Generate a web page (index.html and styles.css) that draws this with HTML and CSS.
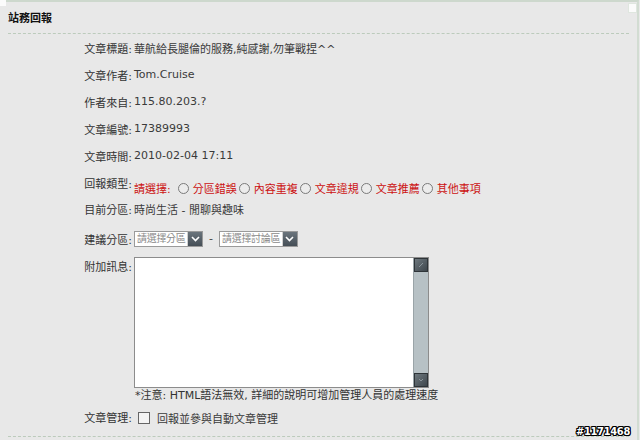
FILE: index.html
```html
<!DOCTYPE html>
<html lang="zh-Hant">
<head>
<meta charset="utf-8">
<title>站務回報</title>
<link rel="stylesheet" href="styles.css">
</head>
<body>
<div class="page">
  <span class="corner corner-tl"></span>
  <span class="corner corner-tr"></span>
  <h1 class="title">站務回報</h1>
  <div class="form">
    <div class="row"><span class="label">文章標題:</span><span class="value">華航給長腿倫的服務,純感謝,勿筆戰捏^^</span></div>
    <div class="row"><span class="label">文章作者:</span><span class="value">Tom.Cruise</span></div>
    <div class="row"><span class="label">作者來自:</span><span class="value">115.80.203.?</span></div>
    <div class="row"><span class="label">文章編號:</span><span class="value">17389993</span></div>
    <div class="row"><span class="label">文章時間:</span><span class="value">2010-02-04 17:11</span></div>
    <div class="row row-type">
      <span class="label">回報類型:</span>
      <span class="value options">
        <span class="red">請選擇:</span>
        <span class="radio"></span><span class="red">分區錯誤</span>
        <span class="radio"></span><span class="red">內容重複</span>
        <span class="radio"></span><span class="red">文章違規</span>
        <span class="radio"></span><span class="red">文章推薦</span>
        <span class="radio"></span><span class="red">其他事項</span>
      </span>
    </div>
    <div class="row row-cur"><span class="label">目前分區:</span><span class="value">時尚生活 - 閒聊與趣味</span></div>
    <div class="row row-sel">
      <span class="label">建議分區:</span>
      <span class="value selects">
        <span class="select sel1"><span class="sel-text">請選擇分區</span><span class="sel-btn"><svg width="9" height="6" viewBox="0 0 9 6"><path d="M1 1 L4.5 4.5 L8 1" fill="none" stroke="#fff" stroke-width="1.6"/></svg></span></span>
        <span class="dash">-</span>
        <span class="select sel2"><span class="sel-text">請選擇討論區</span><span class="sel-btn"><svg width="9" height="6" viewBox="0 0 9 6"><path d="M1 1 L4.5 4.5 L8 1" fill="none" stroke="#fff" stroke-width="1.6"/></svg></span></span>
      </span>
    </div>
    <div class="row row-msg">
      <span class="label">附加訊息:</span>
      <div class="value msg">
        <div class="textbox">
          <div class="text-area"></div>
          <div class="scrollbar">
            <span class="sb-btn"><svg width="8" height="8" viewBox="0 0 8 8"><path d="M2 6 L6 2" stroke="#8a949a" stroke-width="1"/></svg></span>
            <span class="sb-track"></span>
            <span class="sb-btn"><svg width="8" height="8" viewBox="0 0 8 8"><path d="M2 3 L4 5 L6 3" fill="none" stroke="#8a949a" stroke-width="1"/></svg></span>
          </div>
        </div>
        <div class="note">*注意: HTML語法無效, 詳細的說明可增加管理人員的處理速度</div>
      </div>
    </div>
    <div class="row row-manage">
      <span class="label">文章管理:</span>
      <span class="value manage"><span class="checkbox"></span><span>回報並參與自動文章管理</span></span>
    </div>
  </div>
  <div class="bottom-line"></div>
  <span class="watermark">#1171468</span>
</div>
</body>
</html>
```

FILE: styles.css
```css
html, body {
  margin: 0;
  padding: 0;
  width: 640px;
  height: 440px;
  overflow: hidden;
  background: #e8e8e8;
}
body {
  font-family: "DejaVu Sans", "Noto Sans CJK TC", sans-serif;
  font-size: 11px;
  color: #333;
}
.page {
  position: relative;
  width: 639px;
  height: 440px;
  box-sizing: border-box;
  border-top: 2px solid #cdd8cd;
  border-right: 2px solid #d2dcd2;
  background: #e8e8e8;
}
.corner {
  position: absolute;
  width: 6px;
  height: 6px;
  background: #fbfbfb;
}
.corner-tl { left: 0; top: -2px; }
.corner-tr { right: 0; top: 1px; width: 7px; height: 8px; border: 1px solid #dfe6df; }
.title {
  margin: 0 8px;
  padding: 10px 0 8px;
  font-size: 11px;
  font-weight: bold;
  color: #111;
  line-height: 13px;
  border-bottom: 1px dashed #bccbbc;
}
.form {
  display: flex;
  flex-direction: column;
}
.row {
  display: flex;
  align-items: center;
  height: 27px;
}
.label {
  width: 132px;
  flex: none;
  text-align: right;
  color: #333;
  white-space: nowrap;
}
.value {
  margin-left: 2px;
  color: #3a3a3a;
  white-space: nowrap;
}
.row-type {
  height: 29px;
  align-items: flex-start;
}
.row-type .label { margin-top: 6px; }
.row-type .value { margin-top: 11px; }
.options {
  display: flex;
  align-items: center;
}
.red { color: #cc1111; }
.radio {
  display: inline-block;
  width: 9px;
  height: 9px;
  border: 1px solid #7a7a7a;
  border-radius: 50%;
  background: #ececec;
  margin: 0 4px 0 2px;
}
.options .red:first-child { margin-right: 5px; }
.row-cur { height: 22px; }
.row-sel { height: 37px; }
.selects {
  display: flex;
  align-items: center;
}
.select {
  display: flex;
  height: 14px;
  border: 1px solid #9a9a9a;
  background: #fff;
}
.sel-text {
  color: #8a8a8a;
  font-size: 10px;
  letter-spacing: -0.3px;
  line-height: 14px;
  padding: 0 2px;
  overflow: hidden;
}
.sel1 .sel-text { width: 48px; }
.sel2 .sel-text { width: 58px; }
.sel-btn {
  width: 14px;
  height: 14px;
  background: linear-gradient(#6a747c, #454e56);
  display: flex;
  align-items: center;
  justify-content: center;
  border-left: 1px solid #d0d0d0;
}
.dash { margin: 0 6px; color: #444; }
.row-msg {
  height: auto;
  align-items: flex-start;
}
.row-msg .label { margin-top: 1px; }
.msg { margin-left: 2px; }
.textbox {
  display: flex;
  width: 293px;
  height: 129px;
  border: 1px solid #8c8c8c;
  background: #fff;
}
.text-area { flex: 1; }
.scrollbar {
  width: 14px;
  display: flex;
  flex-direction: column;
  background: #b7c1c5;
  border-left: 1px solid #9aa4a8;
}
.sb-btn {
  height: 14px;
  background: linear-gradient(135deg, #6e787e, #3e464c);
  border: 1px solid #2e3438;
  box-sizing: border-box;
  display: flex;
  align-items: center;
  justify-content: center;
}
.sb-track { flex: 1; }
.note {
  margin-top: 1px;
  margin-left: 1px;
  color: #333;
  line-height: 13px;
}
.row-manage { height: 30px; }
.manage {
  display: flex;
  align-items: center;
  margin-left: 6px;
  margin-top: 2px;
}
.checkbox {
  display: inline-block;
  width: 10px;
  height: 10px;
  border: 1px solid #666;
  background: #f4f4f4;
  margin-right: 7px;
}
.bottom-line {
  margin: 4px 8px 0;
  border-top: 1px dashed #bccbbc;
}
.watermark {
  position: absolute;
  right: 7px;
  bottom: 2px;
  font-family: "DejaVu Sans Condensed", "DejaVu Sans", sans-serif;
  font-stretch: condensed;
  font-weight: bold;
  font-size: 11px;
  letter-spacing: -0.3px;
  color: #fff;
  text-shadow: -1px 0 #000, 1px 0 #000, 0 -1px #000, 0 1px #000, -1px -1px #000, 1px 1px #000, -1px 1px #000, 1px -1px #000;
}
```
